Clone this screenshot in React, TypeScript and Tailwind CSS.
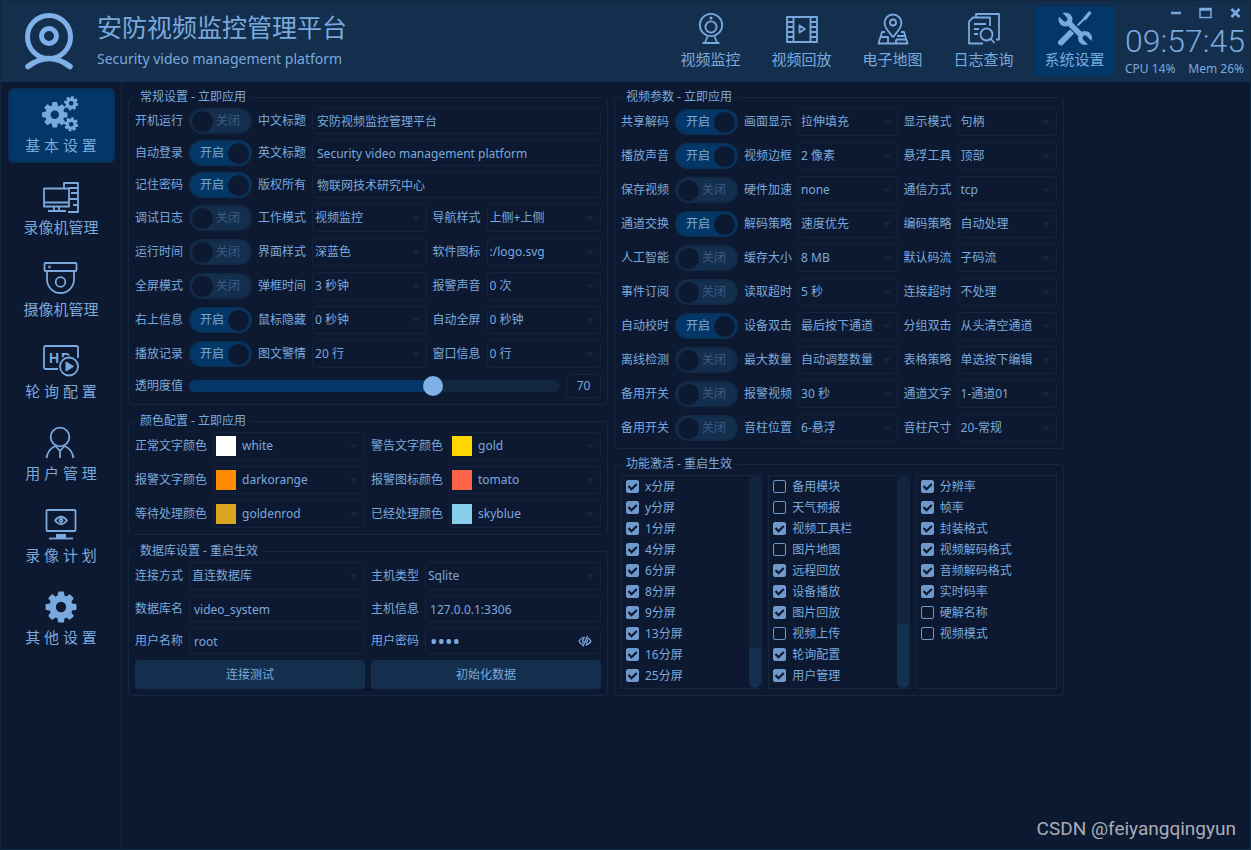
import { useId, useState, type ReactNode } from "react";

type Switch = [label: string, on: boolean];

const COG =
  "M1152 896q0-106-75-181t-181-75-181 75-75 181 75 181 181 75 181-75 75-181zm512-109v222q0 12-8 23t-20 13l-185 28q-19 54-39 91 35 50 107 138 10 12 10 25t-9 23q-27 37-99 108t-94 71q-12 0-26-9l-138-108q-44 23-91 38-16 136-29 186-7 28-36 28h-222q-14 0-24.5-8.500t-11.500-21.500l-28-184q-49-16-90-37l-141 107q-10 9-25 9-14 0-25-11-126-114-165-168-7-10-7-23 0-12 8-23 15-21 51-66.500t54-70.500q-27-50-41-99l-183-27q-13-2-21-12.500t-8-23.500v-222q0-12 8-23t19-13l186-28q14-46 39-92-40-57-107-138-10-12-10-24 0-10 9-23 26-36 98.500-107.500t94.500-71.500q13 0 26 10l138 107q44-23 91-38 16-136 29-186 7-28 36-28h222q14 0 24.500 8.500t11.500 21.500l28 184q49 16 90 37l142-107q9-9 24-9 13 0 25 10 129 119 165 170 7 8 7 22 0 12-8 23-15 21-51 66.500t-54 70.500q26 50 41 98l183 28q13 2 21 12.500t8 23.500z";

const icons: Record<string, ReactNode> = {
  webcam: (
    <>
      <circle cx="18" cy="14" r="11.2" />
      <circle cx="18" cy="16" r="5.6" />
      <circle cx="18" cy="7" r="0.7" />
      <path d="M14.500 25.500L12 31.500M21.500 25.500L24 31.500M9.500 32h17" />
    </>
  ),
  film: (
    <>
      <path d="M3 6h30v25H3zM9.500 6v25M26.500 6v25M3 11h6.500M3 16h6.500M3 21h6.500M3 26h6.500M26.500 11H33M26.500 16H33M26.500 21H33M26.500 26H33" />
      <path d="M15.500 14.500l5.500 3.500-5.500 3.500z" />
    </>
  ),
  map: (
    <>
      <path d="M18 26c-5-6-8.500-9-8.500-14a8.500 8.500 0 0 1 17 0c0 5-3.500 8-8.500 14z" />
      <circle cx="18" cy="11.500" r="3" />
      <path d="M10 21H7L3.500 32.500h29L29 21h-3M5.500 26H13v6.500M22 25h8M21 28.500v4M21 28.500h10.500" />
    </>
  ),
  log: (
    <>
      <path d="M17 32.500H3v-22l4-4h17V15M10 6V3h23v25.500h-3M8 13h12M8 18h5M8 23h4" />
      <circle cx="20.500" cy="23.500" r="6" />
      <path d="M25 28l3.500 4" />
    </>
  ),
  tools: (
    <>
      <path d="M4 31.500l10-10" strokeWidth="6" strokeLinecap="round" />
      <path d="M20 15l10-10" strokeWidth="2" />
      <path d="M28 7.500l4.500-5.500" strokeWidth="3.500" strokeLinecap="round" />
      <path d="M8 8l21 20" stroke="#033767" strokeWidth="8.500" />
      <path d="M9 9l18 18" strokeWidth="5.500" />
      <g stroke="none" fill="currentColor">
        <circle cx="8.500" cy="8.500" r="7" />
        <circle cx="28" cy="27" r="7" />
      </g>
      <path d="M1 1l7 7M36 35l-8-8" stroke="#033767" strokeWidth="5" strokeLinecap="round" />
    </>
  ),
  cogs: (
    <g stroke="none" fill="currentColor">
      <path d={COG} transform="translate(-3 3) scale(0.0165)" />
      <path d={COG} transform="translate(20 -2) rotate(12 8 8) scale(0.0092)" />
      <path d={COG} transform="translate(20 19) rotate(12 8 8) scale(0.0092)" />
    </g>
  ),
  recorder: (
    <>
      <path d="M1 9.500h25v18H1zM1 23.500h25M11 27.500v4M16 27.500v4M5 32h18" />
      <path d="M21 9V4h14v29H25M26 9h9M28 14h7M26 20h9M30 26h5" />
    </>
  ),
  dome: (
    <>
      <rect x="1.500" y="2" width="32" height="8" rx="1" />
      <path d="M4 10v8.500a13.500 13.500 0 0 0 27 0V10" />
      <circle cx="17.500" cy="21" r="4.800" />
      <circle cx="6.500" cy="6" r="0.500" />
    </>
  ),
  hd: (
    <>
      <path d="M35 15V4.500a1.500 1.500 0 0 0-1.500-1.500h-31A1.500 1.500 0 0 0 1 4.500v20A1.500 1.500 0 0 0 2.500 26H15" />
      <g stroke="none" fill="currentColor" fontSize="14" fontWeight="bold" fontFamily="Liberation Sans, sans-serif">
        <text x="6" y="20">H</text>
        <text x="18" y="20">D</text>
      </g>
      <circle cx="26" cy="23.500" r="11" fill="#0d1931" stroke="none" />
      <circle cx="26" cy="23.500" r="9" />
      <path d="M23 19l7.500 4.500L23 28z" fill="currentColor" strokeWidth="1" />
    </>
  ),
  user: (
    <>
      <circle cx="17" cy="12" r="9.300" />
      <path d="M3.500 33c1-6 4-10 9-12l4.500 5 4.500-5c5 2 8 6 9 12M17 26v7" />
    </>
  ),
  plan: (
    <>
      <rect x="3.500" y="3" width="29" height="21" rx="1" />
      <path d="M6 31.500h24" />
      <path d="M13 27h10v4H13z" fill="currentColor" stroke="none" />
      <path d="M12 13.500q6-7.500 12 0q-6 7.500-12 0z" />
      <circle cx="18" cy="13.500" r="1.500" />
    </>
  ),
  cog: <path d={COG} transform="scale(0.0201)" stroke="none" fill="currentColor" />,
};

function Icon({ name }: { name: string }) {
  return (
    <svg viewBox="0 0 36 36" className="size-9 shrink-0 overflow-visible" fill="none" stroke="currentColor" strokeWidth="1.800" strokeLinejoin="round">
      {icons[name]}
    </svg>
  );
}

const TOP_NAV = [
  ["webcam", "视频监控"],
  ["film", "视频回放"],
  ["map", "电子地图"],
  ["log", "日志查询"],
  ["tools", "系统设置"],
];

const SIDE_NAV = [
  ["cogs", "基 本 设 置"],
  ["recorder", "录像机管理"],
  ["dome", "摄像机管理"],
  ["hd", "轮 询 配 置"],
  ["user", "用 户 管 理"],
  ["plan", "录 像 计 划"],
  ["cog", "其 他 设 置"],
];

const TEXT_ROWS: [Switch, string, string][] = [
  [["开机运行", false], "中文标题", "安防视频监控管理平台"],
  [["自动登录", true], "英文标题", "Security video management platform"],
  [["记住密码", true], "版权所有", "物联网技术研究中心"],
];

type ComboRow = [Switch, string, string, string, string];

const COMBO_ROWS: ComboRow[] = [
  [["调试日志", false], "工作模式", "视频监控", "导航样式", "上侧+上侧"],
  [["运行时间", false], "界面样式", "深蓝色", "软件图标", ":/logo.svg"],
  [["全屏模式", false], "弹框时间", "3 秒钟", "报警声音", "0 次"],
  [["右上信息", true], "鼠标隐藏", "0 秒钟", "自动全屏", "0 秒钟"],
  [["播放记录", true], "图文警情", "20 行", "窗口信息", "0 行"],
];

const VIDEO_ROWS: ComboRow[] = [
  [["共享解码", true], "画面显示", "拉伸填充", "显示模式", "句柄"],
  [["播放声音", true], "视频边框", "2 像素", "悬浮工具", "顶部"],
  [["保存视频", false], "硬件加速", "none", "通信方式", "tcp"],
  [["通道交换", true], "解码策略", "速度优先", "编码策略", "自动处理"],
  [["人工智能", false], "缓存大小", "8 MB", "默认码流", "子码流"],
  [["事件订阅", false], "读取超时", "5 秒", "连接超时", "不处理"],
  [["自动校时", true], "设备双击", "最后按下通道", "分组双击", "从头清空通道"],
  [["离线检测", false], "最大数量", "自动调整数量", "表格策略", "单选按下编辑"],
  [["备用开关", false], "报警视频", "30 秒", "通道文字", "1-通道01"],
  [["备用开关", false], "音柱位置", "6-悬浮", "音柱尺寸", "20-常规"],
];

const COLORS = [
  ["正常文字颜色", "white"],
  ["警告文字颜色", "gold"],
  ["报警文字颜色", "darkorange"],
  ["报警图标颜色", "tomato"],
  ["等待处理颜色", "goldenrod"],
  ["已经处理颜色", "skyblue"],
];

const LIST_A: Switch[] = ["x", "y", "1", "4", "6", "8", "9", "13", "16", "25"].map((n) => [n + "分屏", true]);
const LIST_B: Switch[] = [
  ["备用模块", false],
  ["天气预报", false],
  ["视频工具栏", true],
  ["图片地图", false],
  ["远程回放", true],
  ["设备播放", true],
  ["图片回放", true],
  ["视频上传", false],
  ["轮询配置", true],
  ["用户管理", true],
];
const LIST_C: Switch[] = [
  ["分辨率", true],
  ["帧率", true],
  ["封装格式", true],
  ["视频解码格式", true],
  ["音频解码格式", true],
  ["实时码率", true],
  ["硬解名称", false],
  ["视频模式", false],
];

function Group({ title, children }: { title: string; children: ReactNode }) {
  return (
    <fieldset className="min-w-0 rounded border border-[#14273f] px-1.5 pb-1.5">
      <legend className="px-[5px] leading-[22px]">{title}</legend>
      {children}
    </fieldset>
  );
}

function Toggle({ label, on }: { label: string; on: boolean }) {
  const id = useId();
  const [checked, setChecked] = useState(on);
  return (
    <>
      <label htmlFor={id} className="whitespace-nowrap">{label}</label>
      <label
        className={
          "relative flex h-[26px] w-[63px] cursor-pointer items-center rounded-full border-2 px-px " +
          (checked ? "border-[#0a3259] bg-[#033767]" : "flex-row-reverse border-[#112a45] bg-[#142f4e]")
        }
      >
        <input id={id} type="checkbox" role="switch" checked={checked} onChange={(e) => setChecked(e.target.checked)} className="sr-only" />
        <span className={"flex-1 text-center leading-5 " + (checked ? "pl-1" : "pr-1.5 text-[#3a5c84]")}>{checked ? "开启" : "关闭"}</span>
        <span className="size-[21px] rounded-full bg-[#0d1931]" />
      </label>
    </>
  );
}

function Combo({ label, value, swatch }: { label: string; value: string; swatch?: string }) {
  const id = useId();
  return (
    <>
      <label htmlFor={id} className="whitespace-nowrap">{label}</label>
      <div className="relative flex h-7 min-w-0 items-center rounded-sm border border-[#14243c]">
        {swatch && <span className="ml-0.5 size-5 shrink-0" style={{ backgroundColor: swatch }} />}
        <select id={id} className={"h-full w-full min-w-0 appearance-none bg-transparent outline-none " + (swatch ? "pl-1.5" : "pl-0.5")}>
          <option>{value}</option>
        </select>
        <svg viewBox="0 0 8 5" className="pointer-events-none absolute right-1.5 h-[5px] w-2 fill-[#14253e]">
          <path d="M0 0h8L4 5z" />
        </svg>
      </div>
    </>
  );
}

function Field({ label, value, type = "text", wide = false }: { label: string; value: string; type?: string; wide?: boolean }) {
  const id = useId();
  const secret = type === "password";
  return (
    <>
      <label htmlFor={id} className="whitespace-nowrap">{label}</label>
      <div className={"flex h-[26px] min-w-0 items-center rounded-sm border border-[#14243c] " + (wide ? "col-span-3" : "")}>
        <input id={id} type={type} defaultValue={value} className={"h-full w-full min-w-0 bg-transparent px-1 outline-none " + (secret ? "text-[20px]" : "")} />
        {secret && (
          <button aria-label="显示密码" className="pr-2">
            <svg viewBox="0 0 14 12" className="h-3 w-3.5" fill="none" stroke="currentColor" strokeWidth="1.300">
              <path d="M5 10Q2.500 8.800 1 6.200Q3.200 2.500 7 2.300M9.500 2.800Q11.800 4 13 6.200Q10.800 9.800 7.500 10" />
              <path d="M5.200 8Q3.800 5.500 6 3.800M9.300 4.500Q10 7 7.800 8.300M4.800 11.500L9.500 1" />
            </svg>
          </button>
        )}
      </div>
    </>
  );
}

function ComboRows({ rows }: { rows: ComboRow[] }) {
  return rows.map(([sw, l1, v1, l2, v2], i) => (
    <div key={i} className="contents">
      <Toggle label={sw[0]} on={sw[1]} />
      <Combo label={l1} value={v1} />
      <Combo label={l2} value={v2} />
    </div>
  ));
}

function Opacity() {
  const [value, setValue] = useState(70);
  const pct = ((value - 10) / 90) * 100;
  return (
    <>
      <label htmlFor="opacity">透明度值</label>
      <div className="col-span-5 flex h-6 items-center gap-1.5">
        <input
          id="opacity"
          type="range"
          min={10}
          max={100}
          value={value}
          onChange={(e) => setValue(Number(e.target.value))}
          className="h-3 min-w-0 flex-1 appearance-none rounded-full [&::-webkit-slider-thumb]:size-5 [&::-webkit-slider-thumb]:appearance-none [&::-webkit-slider-thumb]:rounded-full [&::-webkit-slider-thumb]:bg-[#7fb1e8]"
          style={{ background: `linear-gradient(to right, #033767 ${pct}%, #13263f ${pct}%)` }}
        />
        <output htmlFor="opacity" className="flex h-6 w-[35px] items-center justify-center rounded-sm border border-[#14273f]">
          {value}
        </output>
      </div>
    </>
  );
}

function CheckList({ items, thumb }: { items: Switch[]; thumb?: string }) {
  return (
    <div className="flex h-[214px] min-w-0 border border-[#14273f]">
      <ul className="min-w-0 flex-1 pl-1">
        {items.map(([text, on]) => (
          <li key={text}>
            <label className="flex h-[21px] items-center gap-1.5 whitespace-nowrap">
              <span className="relative flex">
                <input
                  type="checkbox"
                  defaultChecked={on}
                  className="peer size-[13px] appearance-none rounded-xs border border-[#6f98cb] checked:bg-[#6f98cb]"
                />
                <svg viewBox="0 0 13 13" className="pointer-events-none absolute inset-0 hidden size-[13px] peer-checked:block" fill="none" stroke="#0d1931" strokeWidth="2.200">
                  <path d="M2.500 6l3 3.200L10.800 4" />
                </svg>
              </span>
              {text}
            </label>
          </li>
        ))}
      </ul>
      {thumb && (
        <div className="flex w-3 flex-col justify-end overflow-hidden rounded-full bg-[#11253e]">
          <div className={"rounded-b-full bg-[#14304f] " + thumb} />
        </div>
      )}
    </div>
  );
}

export default function App() {
  const [page, setPage] = useState("系统设置");
  const [section, setSection] = useState("基 本 设 置");

  return (
    <div className="relative flex min-h-screen flex-col border border-[#122740] bg-[#0d1931] font-['Noto_Sans','Noto_Sans_CJK_SC',sans-serif] text-[12px] text-[#7aa9dd]">
      <header className="flex h-[81px] items-center bg-[#142f4e] pb-px">
        <svg viewBox="0 0 52 60" className="ml-[22px] h-[60px] w-[52px] text-[#7fb1e8]" fill="none" stroke="currentColor" strokeLinecap="round">
          <circle cx="26" cy="26" r="21.500" strokeWidth="5" />
          <circle cx="26" cy="25" r="7.500" strokeWidth="5" />
          <path d="M5 55.500q21-16 42 0" strokeWidth="5.500" />
        </svg>
        <div className="ml-[22px] flex-1 whitespace-nowrap">
          <h1 className="text-[25px] leading-9">安防视频监控管理平台</h1>
          <p className="text-[14px] leading-7">Security video management platform</p>
        </div>
        <nav className="flex gap-2">
          {TOP_NAV.map(([icon, text]) => (
            <button
              key={text}
              onClick={() => setPage(text)}
              className={"flex w-[83px] flex-col items-center rounded-md border-2 pt-1 pb-1 text-[15px] leading-6 " + (page === text ? "border-[#0a3259] bg-[#033767]" : "border-transparent")}
            >
              <Icon name={icon} />
              {text}
            </button>
          ))}
        </nav>
        <div className="ml-[9px] flex w-[125px] flex-col pr-1.5">
          <div className="flex h-5 items-center justify-end gap-[17px] pr-0.5">
            <button aria-label="最小化">
              <svg viewBox="0 0 13 12" className="h-3 w-[13px]"><path d="M2 6h10" stroke="currentColor" strokeWidth="2.500" /></svg>
            </button>
            <button aria-label="最大化">
              <svg viewBox="0 0 13 12" className="h-3 w-[13px]" fill="none" stroke="currentColor"><path d="M1 1.500h11v9H1z" strokeWidth="1.500" /><path d="M1 2.500h11" strokeWidth="2.500" /></svg>
            </button>
            <button aria-label="关闭">
              <svg viewBox="0 0 13 12" className="h-3 w-[13px]"><path d="M2.500 2l8 8M10.500 2l-8 8" stroke="currentColor" strokeWidth="2.800" /></svg>
            </button>
          </div>
          <time className="font-[Roboto,sans-serif] text-[32px] leading-9 font-light whitespace-nowrap">09:57:45</time>
          <div className="flex justify-between leading-5 whitespace-nowrap">
            <span>CPU 14%</span>
            <span>Mem 26%</span>
          </div>
        </div>
      </header>

      <div className="flex flex-1">
        <aside className="flex w-[121px] shrink-0 flex-col items-center gap-[7px] border-r border-[#122740] pt-1.5">
          {SIDE_NAV.map(([icon, text]) => (
            <button
              key={text}
              onClick={() => setSection(text)}
              className={"flex w-[107px] flex-col items-center rounded-md border-2 pt-[7px] pb-1 text-[15px] leading-6 " + (section === text ? "border-[#0a3259] bg-[#033767]" : "border-transparent")}
            >
              <Icon name={icon} />
              {text}
            </button>
          ))}
        </aside>

        <main className="min-w-0 flex-1 px-1.5 pt-1">
          <div className="grid max-w-[936px] grid-cols-[480fr_450fr] items-start gap-1.5">
            <div className="flex min-w-0 flex-col gap-[5px]">
              <Group title="常规设置 - 立即应用">
                <div className="grid grid-cols-[auto_auto_auto_1fr_auto_1fr] items-center gap-1.5">
                  {TEXT_ROWS.map(([sw, label, value]) => (
                    <div key={label} className="contents">
                      <Toggle label={sw[0]} on={sw[1]} />
                      <Field label={label} value={value} wide />
                    </div>
                  ))}
                  <ComboRows rows={COMBO_ROWS} />
                  <Opacity />
                </div>
              </Group>

              <Group title="颜色配置 - 立即应用">
                <div className="grid grid-cols-[auto_1fr_auto_1fr] items-center gap-1.5">
                  {COLORS.map(([label, color]) => (
                    <Combo key={label} label={label} value={color} swatch={color} />
                  ))}
                </div>
              </Group>

              <Group title="数据库设置 - 重启生效">
                <div className="grid grid-cols-[auto_1fr_auto_1fr] items-center gap-1.5">
                  <Combo label="连接方式" value="直连数据库" />
                  <Combo label="主机类型" value="Sqlite" />
                  <Field label="数据库名" value="video_system" />
                  <Field label="主机信息" value="127.0.0.1:3306" />
                  <Field label="用户名称" value="root" />
                  <Field label="用户密码" value="root" type="password" />
                  <button className="col-span-2 h-[29px] rounded bg-[#142f4e]">连接测试</button>
                  <button className="col-span-2 h-[29px] rounded bg-[#142f4e]">初始化数据</button>
                </div>
              </Group>
            </div>

            <div className="flex min-w-0 flex-col gap-1">
              <Group title="视频参数 - 立即应用">
                <div className="grid grid-cols-[auto_auto_auto_1fr_auto_1fr] items-center gap-1.5">
                  <ComboRows rows={VIDEO_ROWS} />
                </div>
              </Group>

              <Group title="功能激活 - 重启生效">
                <div className="grid grid-cols-3 gap-1.5">
                  <CheckList items={LIST_A} thumb="h-10" />
                  <CheckList items={LIST_B} thumb="h-16" />
                  <CheckList items={LIST_C} />
                </div>
              </Group>
            </div>
          </div>
        </main>
      </div>

      <p className="absolute right-3.5 bottom-1.5 font-[Roboto,sans-serif] text-[19px] text-[#a9adb5]">CSDN @feiyangqingyun</p>
    </div>
  );
}
